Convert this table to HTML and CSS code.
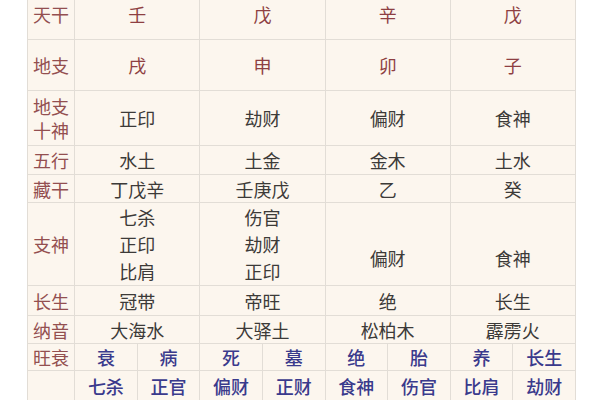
FILE: index.html
```html
<!DOCTYPE html>
<html lang="zh">
<head>
<meta charset="utf-8">
<link rel="stylesheet" href="styles.css">
</head>
<body>
<table class="bazi">
  <colgroup>
    <col class="c-label">
    <col class="c-sub"><col class="c-sub"><col class="c-sub"><col class="c-sub">
    <col class="c-sub"><col class="c-sub"><col class="c-sub"><col class="c-sub">
  </colgroup>
  <tbody>
    <tr class="r-big">
      <th>天干</th>
      <td colspan="2" class="gz">壬</td>
      <td colspan="2" class="gz">戊</td>
      <td colspan="2" class="gz">辛</td>
      <td colspan="2" class="gz">戊</td>
    </tr>
    <tr class="r-big">
      <th>地支</th>
      <td colspan="2" class="gz">戌</td>
      <td colspan="2" class="gz">申</td>
      <td colspan="2" class="gz">卯</td>
      <td colspan="2" class="gz">子</td>
    </tr>
    <tr class="r-two">
      <th>地支<br>十神</th>
      <td colspan="2">正印</td>
      <td colspan="2">劫财</td>
      <td colspan="2">偏财</td>
      <td colspan="2">食神</td>
    </tr>
    <tr class="r-29">
      <th>五行</th>
      <td colspan="2">水土</td>
      <td colspan="2">土金</td>
      <td colspan="2">金木</td>
      <td colspan="2">土水</td>
    </tr>
    <tr class="r-28">
      <th>藏干</th>
      <td colspan="2">丁戊辛</td>
      <td colspan="2">壬庚戊</td>
      <td colspan="2">乙</td>
      <td colspan="2">癸</td>
    </tr>
    <tr class="r-three">
      <th>支神</th>
      <td colspan="2">七杀<br>正印<br>比肩</td>
      <td colspan="2">伤官<br>劫财<br>正印</td>
      <td colspan="2" class="low">偏财</td>
      <td colspan="2" class="low">食神</td>
    </tr>
    <tr class="r-30">
      <th>长生</th>
      <td colspan="2">冠带</td>
      <td colspan="2">帝旺</td>
      <td colspan="2">绝</td>
      <td colspan="2">长生</td>
    </tr>
    <tr class="r-28">
      <th>纳音</th>
      <td colspan="2">大海水</td>
      <td colspan="2">大驿土</td>
      <td colspan="2">松柏木</td>
      <td colspan="2">霹雳火</td>
    </tr>
    <tr class="r-27 blue">
      <th>旺衰</th>
      <td>衰</td><td>病</td><td>死</td><td>墓</td>
      <td>绝</td><td>胎</td><td>养</td><td>长生</td>
    </tr>
    <tr class="r-30 blue">
      <th></th>
      <td>七杀</td><td>正官</td><td>偏财</td><td>正财</td>
      <td>食神</td><td>伤官</td><td>比肩</td><td>劫财</td>
    </tr>
  </tbody>
</table>
</body>
</html>
```
FILE: styles.css
```css
html, body {
  margin: 0;
  padding: 0;
  background: #ffffff;
}
body {
  font-family: "Noto Sans CJK SC", "Noto Sans", sans-serif;
  overflow: hidden;
}
.bazi {
  margin: -12px 0 0 27px;
  border-collapse: collapse;
  table-layout: fixed;
  width: 549px;
  background: #fcf6ee;
  font-size: 18px;
  color: #3c3a38;
}
.c-label { width: 47px; }
.c-sub { width: 62.5px; }
.bazi th,
.bazi td {
  border: 1px solid #e2ddd6;
  padding: 0;
  text-align: center;
  vertical-align: middle;
  line-height: 26px;
  font-weight: normal;
}
.bazi th {
  color: #934f50;
}
.bazi td.gz {
  color: #8e3f42;
}
.r-big { height: 51px; }
.r-two { height: 55px; }
.r-29 { height: 29px; }
.r-28 { height: 28px; }
.r-three { height: 83px; }
.r-30 { height: 30px; }
.r-27 { height: 27px; }
.bazi .r-two th { line-height: 24px; }
.bazi .r-three td { line-height: 27px; }
.bazi .r-three td.low { padding-top: 28px; }
.blue td {
  color: #3a3a8c;
  font-weight: 500;
}
```
